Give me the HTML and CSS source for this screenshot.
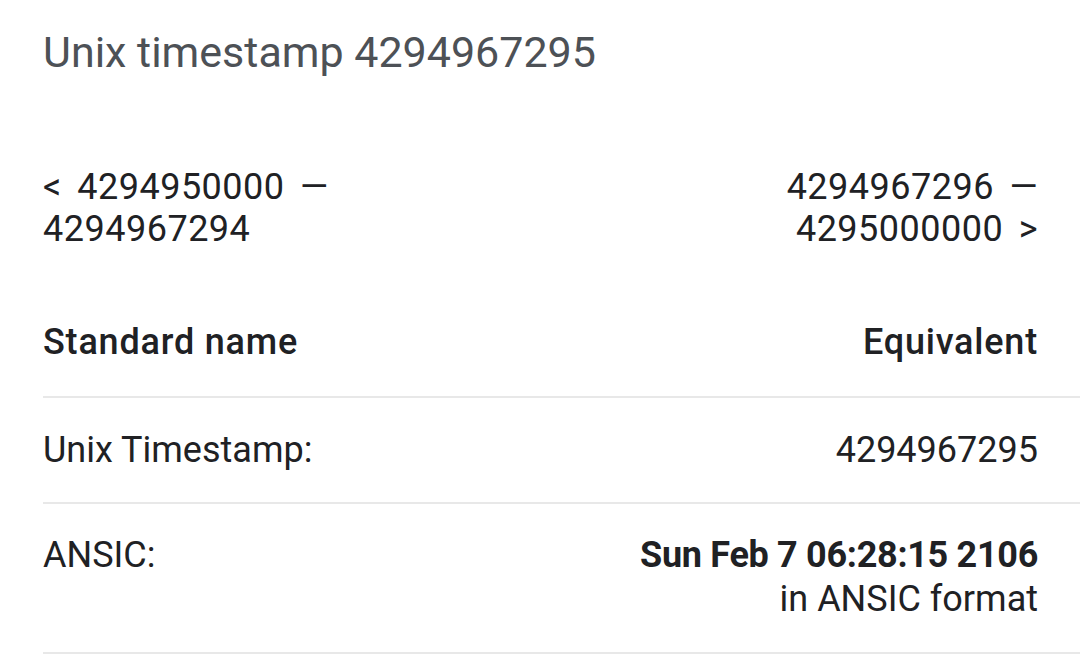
FILE: index.html
```html
<!DOCTYPE html>
<html>
<head>
<meta charset="utf-8">
<link rel="stylesheet" href="styles.css">
</head>
<body>
<div class="page">
  <h1 class="title">Unix timestamp 4294967295</h1>
  <div class="ranges">
    <div class="range range-prev">&lt; 4294950000 —<br>4294967294</div>
    <div class="range range-next">4294967296 —<br>4295000000 &gt;</div>
  </div>
  <div class="table">
    <div class="row row-head">
      <div class="cell-name">Standard name</div>
      <div class="cell-value">Equivalent</div>
    </div>
    <div class="row">
      <div class="cell-name">Unix Timestamp:</div>
      <div class="cell-value">4294967295</div>
    </div>
    <div class="row row-multi">
      <div class="cell-name">ANSIC:</div>
      <div class="cell-value"><strong>Sun Feb 7 06:28:15 2106</strong><br>in ANSIC format</div>
    </div>
  </div>
</div>
</body>
</html>
```

FILE: styles.css
```css
html, body {
  margin: 0;
  padding: 0;
  background: #ffffff;
}
body {
  font-family: Roboto, "Noto Sans", sans-serif;
  color: #202124;
}
.page {
  padding: 28px 0 0 43px;
}
.title {
  margin: 0;
  font-size: 43px;
  line-height: 48px;
  font-weight: 400;
  color: #4d5156;
}
.ranges {
  display: flex;
  justify-content: space-between;
  margin-top: 90px;
  padding-right: 42px;
  font-size: 36px;
  line-height: 42px;
  letter-spacing: 0.5px;
  word-spacing: 6px;
}
.range-next {
  text-align: right;
}
.table {
  margin-top: 38px;
}
.row {
  display: flex;
  justify-content: space-between;
  align-items: flex-start;
  padding: 31px 42px 31px 0;
  border-bottom: 2px solid #e8e8e8;
  font-size: 36px;
  line-height: 42px;
}
.row-head {
  font-weight: 500;
  letter-spacing: 0.8px;
  padding-top: 33px;
  padding-bottom: 33px;
}
.row-multi {
  line-height: 44px;
  padding-top: 29px;
  padding-bottom: 31px;
}
.cell-value {
  text-align: right;
}
.cell-value strong {
  font-weight: 700;
  letter-spacing: -0.3px;
}
```
